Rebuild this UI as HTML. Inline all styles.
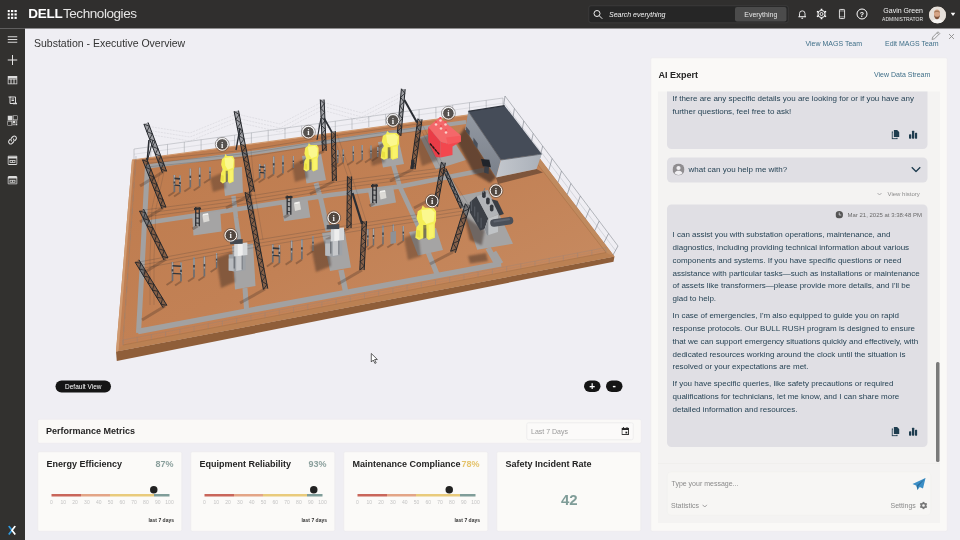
<!DOCTYPE html>
<html lang="en">
<head>
<meta charset="utf-8">
<title>Substation - Executive Overview</title>
<style>
*{box-sizing:border-box;margin:0;padding:0}
html,body{width:960px;height:540px;overflow:hidden;background:#efeef3}
#vp{position:absolute;left:0;top:0;width:960px;height:540px;overflow:hidden}
#app{position:absolute;left:0;top:0;width:1920px;height:1080px;transform:scale(.5);transform-origin:0 0;font-family:"Liberation Sans",sans-serif;background:#efeef3;color:#222}
#app div,#app svg,#app span{position:absolute}
.t{white-space:nowrap}
#topbar{left:0;top:0;width:1920px;height:57px;background:#302f2e}
#sidebar{left:0;top:57px;width:50px;height:1023px;background:#32312f}
.logo{left:56.5px;top:11px;font-size:27px;line-height:30px;color:#f0f0f0;white-space:nowrap}
.logo b{position:static;color:#fff;letter-spacing:-.55px}
.logo i{position:static;font-style:normal;letter-spacing:-.85px;color:#e4e4e4;margin-left:1px}
#search{left:1177px;top:11px;width:400px;height:35px;border:1px solid #484848;border-radius:5px;background:#262626}
#search .ph{left:40px;top:8px;font-size:14px;font-style:italic;color:#f4f4f4;line-height:17px}
#search .btn{left:292px;top:2px;width:103px;height:29px;background:#4b4b4b;border-radius:4px;color:#e6e6e6;font-size:14px;line-height:29px;text-align:center}
.uname{left:1700px;top:13px;width:146px;text-align:right;color:#f2f2f2;font-size:14px;line-height:17px}
.urole{left:1700px;top:33px;width:146px;text-align:right;color:#e8e8e8;font-size:10px;line-height:12px}
.avatar{left:1858px;top:12.5px;width:34px;height:34px;border-radius:50%;background:#cdbfb3;overflow:hidden}
h1{position:absolute;left:68px;top:73px;font-size:21px;font-weight:normal;color:#333;line-height:26px;white-space:nowrap}
.lnk{font-size:14px;color:#3f6f88;line-height:18px;white-space:nowrap}
.panel{background:#faf9f7;border:1px solid #e8e7ea;border-radius:4px}
.h18{font-size:18px;font-weight:bold;color:#242424;line-height:22px;white-space:nowrap}
.bubble{left:1334px;width:521px;background:#e0dfe4;border-radius:9px}
.msg{left:1345px;font-size:16px;line-height:25.7px;color:#1f3d4f;white-space:nowrap}
.card{top:903px;width:289px;height:160px;background:#fbfaf8;border:1px solid #e8e7ea;border-radius:4px}
.card .ct{left:17px;top:13px}
.card .v{right:16px;top:13px;font-size:18px;font-weight:bold;line-height:22px}
.card .l7{right:15px;top:130px;font-size:10px;font-weight:bold;color:#333;line-height:12px}
.gauge{left:27px;top:84px;width:236px;height:5px;background:linear-gradient(90deg,#c9665b 0,#c9665b 25%,#e3a587 25%,#e3a587 50%,#e9cb7c 50%,#e9cb7c 87%,#7f9d99 87%,#7f9d99 100%)}
.ticks{left:27px;top:94px;width:236px;height:12px;font-size:10px;color:#c4c4c4;line-height:12px}
.ticks span{width:30px;margin-left:-15px;text-align:center;top:0}
.dot{top:68px;width:15px;height:15px;margin-left:-7.5px;border-radius:50%;background:#222}
</style>
</head>
<body>
<div id="vp"><div id="app">

<div id="topbar">
  <svg style="left:15px;top:20px" width="19" height="18" viewBox="0 0 19 18" fill="#fff"><rect x="0" y="0" width="4.5" height="4.2"/><rect x="7" y="0" width="4.5" height="4.2"/><rect x="14" y="0" width="4.5" height="4.2"/><rect x="0" y="6.8" width="4.5" height="4.2"/><rect x="7" y="6.8" width="4.5" height="4.2"/><rect x="14" y="6.8" width="4.5" height="4.2"/><rect x="0" y="13.6" width="4.5" height="4.2"/><rect x="7" y="13.6" width="4.5" height="4.2"/><rect x="14" y="13.6" width="4.5" height="4.2"/></svg>
  <div class="logo"><b>DELL</b><i>Technologies</i></div>
  <div id="search">
    <svg style="left:8px;top:7px" width="20" height="20" viewBox="0 0 20 20" fill="none" stroke="#efefef" stroke-width="2"><circle cx="8" cy="8" r="6"/><path d="M12.5 12.5l6 6"/></svg>
    <div class="ph t">Search everything</div>
    <div class="btn">Everything</div>
  </div>
  <!-- bell -->
  <svg style="left:1596px;top:18px" width="17" height="21" viewBox="0 0 20 24" fill="none" stroke="#fff" stroke-width="2"><path d="M3.5 17.5v-7a6.5 6.5 0 0 1 13 0v7"/><path d="M1 18h18" stroke-width="2.4"/><path d="M8 21.5h4" stroke-width="2.4"/></svg>
  <!-- gear -->
  <svg style="left:1631px;top:16px" width="24" height="24" viewBox="0 0 24 24" fill="none" stroke="#fff"><circle cx="12" cy="12" r="7.2" stroke-width="2"/><circle cx="12" cy="12" r="3" stroke-width="1.8"/><g stroke-width="3.4"><path d="M12 1.5v3M12 19.5v3M2.9 6.75l2.6 1.5M18.5 15.75l2.6 1.5M2.9 17.25l2.6-1.5M18.5 8.25l2.6-1.5"/></g></svg>
  <!-- phone -->
  <svg style="left:1677px;top:17px" width="14" height="22" viewBox="0 0 16 24" fill="none" stroke="#fff" stroke-width="2"><rect x="2" y="1.5" width="12" height="21" rx="2"/><path d="M2 5h12M2 18.5h12" stroke-width="1.2"/></svg>
  <!-- help -->
  <svg style="left:1712px;top:16px" width="24" height="24" viewBox="0 0 24 24" fill="none" stroke="#fff" stroke-width="2"><circle cx="12" cy="12" r="10"/><text x="12" y="17" font-family="Liberation Sans,sans-serif" font-size="14" font-weight="bold" text-anchor="middle" fill="#fff" stroke="none">?</text></svg>
  <div class="uname t">Gavin Green</div>
  <div class="urole t">ADMINISTRATOR</div>
  <div class="avatar">
    <svg style="left:0;top:0" width="34" height="34" viewBox="0 0 34 34"><rect width="34" height="34" fill="#e5dfd9"/><path d="M4 34c1-6 6-8.500 12.500-8.500S29 28 30 34z" fill="#f4f3f1"/><ellipse cx="16" cy="14.500" rx="6" ry="8.300" fill="#d6a384"/><path d="M10.200 16c0 6.500 2.500 9.500 5.800 9.500s5.800-3 5.800-9.500c-.8 3.500-2.500 4.500-5.800 4.500s-5-1-5.800-4.500z" fill="#7e5139"/><path d="M10.200 13c.3-6.500 11.300-6.500 11.600 0-2.500-2.500-9-2.500-11.600 0z" fill="#a67b5c"/></svg>
  </div>
  <svg style="left:1901px;top:25px" width="10" height="7" viewBox="0 0 10 7"><path d="M0 0h10l-5 7z" fill="#fff"/></svg>
</div>

<div id="sidebar">
  <!-- icons placed relative to sidebar (top offset 57) -->
  <svg style="left:15px;top:15px" width="20" height="14" viewBox="0 0 20 14" stroke="#d8d8d8" stroke-width="2"><path d="M0 1.5h20M0 7h20M0 12.5h20"/></svg>
  <svg style="left:15px;top:53px" width="20" height="20" viewBox="0 0 20 20" stroke="#e4e4e4" stroke-width="2"><path d="M10 0v20M0 10h20"/></svg>
  <svg style="left:15px;top:95px" width="20" height="17" viewBox="0 0 20 17" fill="none" stroke="#dcdcdc" stroke-width="2"><rect x="1" y="1" width="18" height="15"/><path d="M1 6h18M7 6v10M13 6v10" /><path d="M1 3h18" stroke-width="3"/></svg>
  <svg style="left:16px;top:134px" width="19" height="19" viewBox="0 0 19 19" fill="none" stroke="#dcdcdc" stroke-width="2"><path d="M4 3h11v13H4z"/><path d="M1 3h4M7 7h5M7 10h5" /><path d="M10 16h8" stroke-width="3"/></svg>
  <svg style="left:15px;top:174px" width="20" height="20" viewBox="0 0 20 20" fill="#dcdcdc"><rect x="0" y="0" width="9" height="9"/><rect x="11" y="0" width="9" height="9" fill="none" stroke="#dcdcdc" stroke-width="2"/><rect x="0" y="11" width="9" height="9" fill="none" stroke="#dcdcdc" stroke-width="2"/><rect x="11" y="11" width="4" height="4"/><rect x="16" y="16" width="4" height="4"/><rect x="16" y="11" width="4" height="4" opacity=".6"/><rect x="11" y="16" width="4" height="4" opacity=".6"/></svg>
  <svg style="left:14px;top:212px" width="22" height="22" viewBox="0 0 22 22" fill="none" stroke="#dcdcdc" stroke-width="2.2" stroke-linecap="round"><path d="M9 13a4.5 4.5 0 0 1 0-6l3-3a4.3 4.3 0 0 1 6 6l-2 2"/><path d="M13 9a4.5 4.5 0 0 1 0 6l-3 3a4.3 4.3 0 0 1-6-6l2-2"/></svg>
  <svg style="left:15px;top:254px" width="20" height="19" viewBox="0 0 20 19" fill="none" stroke="#dcdcdc" stroke-width="2"><rect x="1" y="1" width="18" height="17" rx="1"/><path d="M1 4h18" stroke-width="4"/><rect x="5" y="10" width="10" height="4" stroke-width="1.6"/><path d="M10 10v4" stroke-width="1.6"/></svg>
  <svg style="left:15px;top:295px" width="20" height="17" viewBox="0 0 20 17" fill="none" stroke="#dcdcdc" stroke-width="2"><rect x="1" y="1" width="18" height="15" rx="1"/><path d="M1 3.5h18" stroke-width="3.4"/><rect x="5" y="8.5" width="10" height="4" stroke-width="1.6"/><path d="M10 8.5v4" stroke-width="1.6"/></svg>
  <!-- X logo bottom -->
  <svg style="left:16px;top:994px" width="16" height="19" viewBox="0 0 16 19" fill="none" stroke-width="3.4"><path d="M1.5 1l6.5 8.500-6.500 8.500" stroke="#2f9be0"/><path d="M14.500 1L8 9.500l6.500 8.500" stroke="#fff"/></svg>
</div>

<h1>Substation - Executive Overview</h1>
<div class="lnk" style="left:1611px;top:77px">View MAGS Team</div>
<div class="lnk" style="left:1770px;top:77px">Edit MAGS Team</div>
<svg style="left:1861px;top:60px" width="22" height="22" viewBox="0 0 22 22" fill="none" stroke="#9a9a9a" stroke-width="2"><path d="M3 19l1.5-5L15 3.5l3.5 3.5L8 17.5z"/><path d="M13 5.5l3.5 3.5"/></svg>
<svg style="left:1897px;top:67px" width="12" height="12" viewBox="0 0 16 16" stroke="#8a8a8a" stroke-width="2.4"><path d="M1.5 1.5l13 13M14.5 1.5l-13 13"/></svg>

<!--SC-->
<svg style="left:50px;top:100px" width="1250" height="720" viewBox="25 50 625 360">
<defs><linearGradient id="gnd" x1="0" y1="0" x2="1" y2="1"><stop offset="0" stop-color="#bd7a4c"/><stop offset=".5" stop-color="#c28155"/><stop offset="1" stop-color="#c98f66"/></linearGradient><filter id="bl" x="-20%" y="-20%" width="140%" height="140%"><feGaussianBlur stdDeviation="1.2"/></filter><filter id="bl2" x="-20%" y="-20%" width="140%" height="140%"><feGaussianBlur stdDeviation="0.5"/></filter></defs>
<polygon points="132.0,160.0 503.0,110.3 614.5,256.5 116.0,351.6" fill="url(#gnd)" />
<polygon points="116.0,351.6 614.5,256.5 613.5,261.8 116.8,361.0" fill="#8f5e39" />
<polygon points="116.0,351.6 614.5,256.5 606.0,252.5 123.0,345.0" fill="#bb8153" />
<polygon points="614.5,256.5 503.0,110.3 497.0,112.0 606.0,252.5" fill="#c08a5e" />
<polyline points="123.0,345.0 606.0,252.5 497.0,112.0" fill="none" stroke="#a87248" stroke-width="0.6" />
<polygon points="132.0,160.0 116.0,351.6 118.5,351.0 134.0,160.5" fill="#d09a70" />
<polyline points="132.0,160.0 503.0,110.3" fill="none" stroke="#d09a70" stroke-width="1.2" />
<polyline points="148.0,166.3 262.5,151.5 380.0,134.0 466.0,122.0" fill="none" stroke="#a2a1a1" stroke-width="4.2" stroke-linejoin="round"/>
<polyline points="147.5,165.0 143.0,250.0 138.5,333.0" fill="none" stroke="#a2a1a1" stroke-width="5" stroke-linejoin="round"/>
<polyline points="138.0,331.5 250.0,310.4 450.0,273.3 501.0,263.8" fill="none" stroke="#a2a1a1" stroke-width="5.5" stroke-linejoin="round"/>
<polyline points="145.0,223.0 240.0,208.7 330.0,195.0 400.0,186.5 484.0,170.0" fill="none" stroke="#a2a1a1" stroke-width="4.6" stroke-linejoin="round"/>
<polyline points="233.5,196.0 236.0,218.0 240.0,246.0" fill="none" stroke="#a2a1a1" stroke-width="4.5" stroke-linejoin="round"/>
<polyline points="245.0,288.0 246.5,309.0" fill="none" stroke="#a2a1a1" stroke-width="5" stroke-linejoin="round"/>
<polyline points="316.0,183.0 321.0,200.0 328.0,231.0" fill="none" stroke="#a2a1a1" stroke-width="5" stroke-linejoin="round"/>
<polyline points="341.0,270.0 345.5,291.0" fill="none" stroke="#a2a1a1" stroke-width="5.5" stroke-linejoin="round"/>
<polyline points="393.0,164.0 400.0,187.0 420.0,230.0" fill="none" stroke="#a2a1a1" stroke-width="4.6" stroke-linejoin="round"/>
<polyline points="428.0,252.0 437.0,274.0" fill="none" stroke="#a2a1a1" stroke-width="5" stroke-linejoin="round"/>
<polyline points="446.0,172.0 457.0,195.0 468.0,214.0" fill="none" stroke="#a2a1a1" stroke-width="4.6" stroke-linejoin="round"/>
<polyline points="488.0,248.0 497.0,264.0" fill="none" stroke="#a2a1a1" stroke-width="5.5" stroke-linejoin="round"/>
<polyline points="501.0,263.5 494.0,252.0" fill="none" stroke="#a2a1a1" stroke-width="5" stroke-linejoin="round"/>
<polygon points="222.0,168.8 241.9,166.9 243.0,192.5 225.0,196.0" fill="#a5a4a4" />
<polygon points="302.0,156.0 321.0,153.5 326.0,180.0 306.5,183.5" fill="#a5a4a4" />
<polygon points="378.0,142.0 398.5,139.5 404.0,164.0 383.0,167.5" fill="#a5a4a4" />
<polygon points="420.0,137.0 446.0,129.0 466.0,160.0 436.0,169.5" fill="#a5a4a4" />
<polygon points="192.2,214.7 220.3,211.0 221.5,231.5 193.5,235.5" fill="#a5a4a4" />
<polygon points="281.3,202.5 307.5,199.2 310.3,217.5 284.0,221.3" fill="#a5a4a4" />
<polygon points="368.0,190.5 393.0,186.5 396.0,202.5 371.0,207.0" fill="#a5a4a4" />
<polygon points="232.0,246.0 253.0,243.5 255.5,286.0 235.0,289.5" fill="#a5a4a4" />
<polygon points="322.0,233.0 344.5,230.0 351.0,267.5 330.0,271.0" fill="#a5a4a4" />
<polygon points="409.0,232.0 436.0,228.0 443.0,250.0 418.0,255.5" fill="#a5a4a4" />
<polygon points="459.0,196.0 488.0,190.0 513.0,243.7 477.2,249.8" fill="#a5a4a4" />
<polygon points="210.0,178.0 224.0,172.0 226.0,188.0 213.0,192.0" fill="#3a2a22" opacity="0.38" filter="url(#bl)"/>
<polygon points="292.0,165.0 306.0,158.0 308.0,178.0 295.0,182.0" fill="#3a2a22" opacity="0.38" filter="url(#bl)"/>
<polygon points="369.0,150.0 383.0,144.0 385.0,162.0 372.0,166.0" fill="#3a2a22" opacity="0.38" filter="url(#bl)"/>
<polygon points="311.0,246.0 328.0,240.0 331.0,266.0 316.0,272.0" fill="#3a2a22" opacity="0.45" filter="url(#bl)"/>
<polygon points="216.0,258.0 232.0,252.0 235.0,282.0 221.0,288.0" fill="#3a2a22" opacity="0.45" filter="url(#bl)"/>
<polygon points="404.0,238.0 418.0,232.0 421.0,256.0 408.0,260.0" fill="#3a2a22" opacity="0.38" filter="url(#bl)"/>
<polygon points="463.9,215.0 484.6,230.4 481.7,245.2 469.8,240.0" fill="#3a2a22" opacity="0.5" filter="url(#bl)"/>
<polygon points="415.0,140.0 430.0,134.0 438.0,160.0 422.0,166.0" fill="#3a2a22" opacity="0.4" filter="url(#bl)"/>
<polygon points="468.0,256.0 486.0,253.0 488.0,261.0 470.0,263.5" fill="#3a2a22" opacity="0.45" filter="url(#bl)"/>
<polygon points="456.0,140.0 465.2,127.0 496.1,177.4 490.2,183.0 473.5,173.0" fill="#3a2a22" opacity="0.68" filter="url(#bl)"/>
<polyline points="163.0,172.0 140.0,186.0" fill="none" stroke="#3a2a22" stroke-width="3" opacity="0.28" filter="url(#bl2)"/>
<polyline points="163.0,208.0 140.0,222.0" fill="none" stroke="#3a2a22" stroke-width="3" opacity="0.28" filter="url(#bl2)"/>
<polyline points="166.0,259.0 142.0,274.0" fill="none" stroke="#3a2a22" stroke-width="3" opacity="0.28" filter="url(#bl2)"/>
<polyline points="165.0,306.0 142.0,320.0" fill="none" stroke="#3a2a22" stroke-width="3" opacity="0.28" filter="url(#bl2)"/>
<polyline points="252.0,194.0 226.0,208.0" fill="none" stroke="#3a2a22" stroke-width="3" opacity="0.28" filter="url(#bl2)"/>
<polyline points="265.0,289.0 240.0,303.0" fill="none" stroke="#3a2a22" stroke-width="3" opacity="0.28" filter="url(#bl2)"/>
<polyline points="324.0,151.0 300.0,163.0" fill="none" stroke="#3a2a22" stroke-width="3" opacity="0.28" filter="url(#bl2)"/>
<polyline points="334.0,181.0 310.0,194.0" fill="none" stroke="#3a2a22" stroke-width="3" opacity="0.28" filter="url(#bl2)"/>
<polyline points="349.0,228.0 326.0,240.0" fill="none" stroke="#3a2a22" stroke-width="3" opacity="0.28" filter="url(#bl2)"/>
<polyline points="362.0,270.0 338.0,284.0" fill="none" stroke="#3a2a22" stroke-width="3" opacity="0.28" filter="url(#bl2)"/>
<polyline points="399.0,136.0 378.0,147.0" fill="none" stroke="#3a2a22" stroke-width="3" opacity="0.28" filter="url(#bl2)"/>
<polyline points="413.0,169.0 390.0,181.0" fill="none" stroke="#3a2a22" stroke-width="3" opacity="0.28" filter="url(#bl2)"/>
<polyline points="437.0,196.0 414.0,208.0" fill="none" stroke="#3a2a22" stroke-width="3" opacity="0.28" filter="url(#bl2)"/>
<polyline points="453.0,252.0 430.0,264.0" fill="none" stroke="#3a2a22" stroke-width="3" opacity="0.28" filter="url(#bl2)"/>
<polyline points="134.0,149.0 503.0,98.0" fill="none" stroke="#7d838b" stroke-width="0.6" opacity="0.55"/>
<polyline points="134.0,154.2 503.0,103.2" fill="none" stroke="#7d838b" stroke-width="0.4" opacity="0.385"/>
<polyline points="134.0,159.5 134.0,149.0" fill="none" stroke="#7d838b" stroke-width="0.7" opacity="0.55"/>
<polyline points="150.8,157.2 150.8,146.7" fill="none" stroke="#7d838b" stroke-width="0.7" opacity="0.55"/>
<polyline points="167.5,154.9 167.5,144.4" fill="none" stroke="#7d838b" stroke-width="0.7" opacity="0.55"/>
<polyline points="184.3,152.5 184.3,142.0" fill="none" stroke="#7d838b" stroke-width="0.7" opacity="0.55"/>
<polyline points="201.1,150.2 201.1,139.7" fill="none" stroke="#7d838b" stroke-width="0.7" opacity="0.55"/>
<polyline points="217.9,147.9 217.9,137.4" fill="none" stroke="#7d838b" stroke-width="0.7" opacity="0.55"/>
<polyline points="234.6,145.6 234.6,135.1" fill="none" stroke="#7d838b" stroke-width="0.7" opacity="0.55"/>
<polyline points="251.4,143.3 251.4,132.8" fill="none" stroke="#7d838b" stroke-width="0.7" opacity="0.55"/>
<polyline points="268.2,141.0 268.2,130.5" fill="none" stroke="#7d838b" stroke-width="0.7" opacity="0.55"/>
<polyline points="285.0,138.6 285.0,128.1" fill="none" stroke="#7d838b" stroke-width="0.7" opacity="0.55"/>
<polyline points="301.7,136.3 301.7,125.8" fill="none" stroke="#7d838b" stroke-width="0.7" opacity="0.55"/>
<polyline points="318.5,134.0 318.5,123.5" fill="none" stroke="#7d838b" stroke-width="0.7" opacity="0.55"/>
<polyline points="335.3,131.7 335.3,121.2" fill="none" stroke="#7d838b" stroke-width="0.7" opacity="0.55"/>
<polyline points="352.0,129.4 352.0,118.9" fill="none" stroke="#7d838b" stroke-width="0.7" opacity="0.55"/>
<polyline points="368.8,127.0 368.8,116.5" fill="none" stroke="#7d838b" stroke-width="0.7" opacity="0.55"/>
<polyline points="385.6,124.7 385.6,114.2" fill="none" stroke="#7d838b" stroke-width="0.7" opacity="0.55"/>
<polyline points="402.4,122.4 402.4,111.9" fill="none" stroke="#7d838b" stroke-width="0.7" opacity="0.55"/>
<polyline points="419.1,120.1 419.1,109.6" fill="none" stroke="#7d838b" stroke-width="0.7" opacity="0.55"/>
<polyline points="435.9,117.8 435.9,107.3" fill="none" stroke="#7d838b" stroke-width="0.7" opacity="0.55"/>
<polyline points="452.7,115.5 452.7,105.0" fill="none" stroke="#7d838b" stroke-width="0.7" opacity="0.55"/>
<polyline points="469.5,113.1 469.5,102.6" fill="none" stroke="#7d838b" stroke-width="0.7" opacity="0.55"/>
<polyline points="486.2,110.8 486.2,100.3" fill="none" stroke="#7d838b" stroke-width="0.7" opacity="0.55"/>
<polyline points="503.0,108.5 503.0,98.0" fill="none" stroke="#7d838b" stroke-width="0.7" opacity="0.55"/>
<polyline points="505.0,96.0 618.0,246.0" fill="none" stroke="#6f757d" stroke-width="0.6" opacity=".8"/>
<polyline points="504.0,103.0 615.5,250.5" fill="none" stroke="#7d838b" stroke-width="0.4" opacity=".6"/>
<polyline points="503.0,110.0 505.0,96.0" fill="none" stroke="#6f757d" stroke-width="0.7" opacity=".8"/>
<polyline points="512.2,122.1 514.4,108.5" fill="none" stroke="#6f757d" stroke-width="0.7" opacity=".8"/>
<polyline points="521.3,134.2 523.8,121.0" fill="none" stroke="#6f757d" stroke-width="0.7" opacity=".8"/>
<polyline points="530.5,146.2 533.2,133.5" fill="none" stroke="#6f757d" stroke-width="0.7" opacity=".8"/>
<polyline points="539.7,158.3 542.7,146.0" fill="none" stroke="#6f757d" stroke-width="0.7" opacity=".8"/>
<polyline points="548.8,170.4 552.1,158.5" fill="none" stroke="#6f757d" stroke-width="0.7" opacity=".8"/>
<polyline points="558.0,182.5 561.5,171.0" fill="none" stroke="#6f757d" stroke-width="0.7" opacity=".8"/>
<polyline points="567.2,194.6 570.9,183.5" fill="none" stroke="#6f757d" stroke-width="0.7" opacity=".8"/>
<polyline points="576.3,206.7 580.3,196.0" fill="none" stroke="#6f757d" stroke-width="0.7" opacity=".8"/>
<polyline points="585.5,218.8 589.8,208.5" fill="none" stroke="#6f757d" stroke-width="0.7" opacity=".8"/>
<polyline points="594.7,230.8 599.2,221.0" fill="none" stroke="#6f757d" stroke-width="0.7" opacity=".8"/>
<polyline points="603.8,242.9 608.6,233.5" fill="none" stroke="#6f757d" stroke-width="0.7" opacity=".8"/>
<polyline points="613.0,255.0 618.0,246.0" fill="none" stroke="#6f757d" stroke-width="0.7" opacity=".8"/>
<polyline points="146.0,126.0 190.0,133.0 236.5,114.0 280.0,124.0 322.0,102.0 362.0,113.0 403.0,92.0" fill="none" stroke="#3b3f45" stroke-width="0.4" opacity=".22" stroke-dasharray="2 1"/>
<polyline points="146.0,130.0 190.0,137.0 236.5,118.0 280.0,128.0 322.0,106.0 362.0,117.0 403.0,96.0" fill="none" stroke="#3b3f45" stroke-width="0.4" opacity=".22" stroke-dasharray="2 1"/>
<polyline points="146.0,134.0 190.0,141.0 236.5,122.0 280.0,132.0 322.0,110.0 362.0,121.0 403.0,100.0" fill="none" stroke="#3b3f45" stroke-width="0.4" opacity=".22" stroke-dasharray="2 1"/>
<polyline points="168.4,196.0 174.4,192.0" fill="none" stroke="#3a2a22" stroke-width="2" opacity=".32" filter="url(#bl2)"/>
<polyline points="174.4,192.0 174.4,175.0" fill="none" stroke="#6a6d72" stroke-width="1.7" />
<polyline points="174.4,185.2 174.4,175.0" fill="none" stroke="#a4a7ab" stroke-width="1.275" />
<polyline points="174.4,183.5 174.4,181.5" fill="none" stroke="#3d4046" stroke-width="1.7" />
<polyline points="174.0,196.5 180.0,192.5" fill="none" stroke="#3a2a22" stroke-width="2" opacity=".32" filter="url(#bl2)"/>
<polyline points="180.0,192.5 180.0,175.5" fill="none" stroke="#6a6d72" stroke-width="1.7" />
<polyline points="180.0,185.7 180.0,175.5" fill="none" stroke="#a4a7ab" stroke-width="1.275" />
<polyline points="180.0,184.0 180.0,182.0" fill="none" stroke="#3d4046" stroke-width="1.7" />
<polyline points="174.4,178.4 180.0,178.9" fill="none" stroke="#34373c" stroke-width="1.6" />
<polyline points="174.4,185.2 180.0,185.7" fill="none" stroke="#34373c" stroke-width="1.2" />
<polyline points="184.3,191.5 190.3,187.5" fill="none" stroke="#3a2a22" stroke-width="2" opacity=".32" filter="url(#bl2)"/>
<polyline points="190.3,187.5 190.3,168.5" fill="none" stroke="#6a6d72" stroke-width="1.7" />
<polyline points="190.3,179.9 190.3,168.5" fill="none" stroke="#a4a7ab" stroke-width="1.275" />
<polyline points="190.3,178.0 190.3,175.7" fill="none" stroke="#3d4046" stroke-width="1.7" />
<polyline points="193.7,190.5 199.7,186.5" fill="none" stroke="#3a2a22" stroke-width="2" opacity=".32" filter="url(#bl2)"/>
<polyline points="199.7,186.5 199.7,167.5" fill="none" stroke="#6a6d72" stroke-width="1.7" />
<polyline points="199.7,178.9 199.7,167.5" fill="none" stroke="#a4a7ab" stroke-width="1.275" />
<polyline points="199.7,177.0 199.7,174.7" fill="none" stroke="#3d4046" stroke-width="1.7" />
<polyline points="204.0,183.0 210.0,179.0" fill="none" stroke="#3a2a22" stroke-width="2" opacity=".32" filter="url(#bl2)"/>
<polyline points="210.0,179.0 210.0,167.0" fill="none" stroke="#6a6d72" stroke-width="1.3" />
<polyline points="210.0,174.2 210.0,167.0" fill="none" stroke="#a4a7ab" stroke-width="0.9750000000000001" />
<polyline points="210.0,173.0 210.0,171.6" fill="none" stroke="#3d4046" stroke-width="1.3" />
<polyline points="253.7,182.0 259.7,178.0" fill="none" stroke="#3a2a22" stroke-width="2" opacity=".32" filter="url(#bl2)"/>
<polyline points="259.7,178.0 259.7,164.0" fill="none" stroke="#6a6d72" stroke-width="1.7" />
<polyline points="259.7,172.4 259.7,164.0" fill="none" stroke="#a4a7ab" stroke-width="1.275" />
<polyline points="259.7,171.0 259.7,169.3" fill="none" stroke="#3d4046" stroke-width="1.7" />
<polyline points="258.6,182.5 264.6,178.5" fill="none" stroke="#3a2a22" stroke-width="2" opacity=".32" filter="url(#bl2)"/>
<polyline points="264.6,178.5 264.6,164.5" fill="none" stroke="#6a6d72" stroke-width="1.7" />
<polyline points="264.6,172.9 264.6,164.5" fill="none" stroke="#a4a7ab" stroke-width="1.275" />
<polyline points="264.6,171.5 264.6,169.8" fill="none" stroke="#3d4046" stroke-width="1.7" />
<polyline points="259.7,166.8 264.6,167.3" fill="none" stroke="#34373c" stroke-width="1.6" />
<polyline points="259.7,172.4 264.6,172.9" fill="none" stroke="#34373c" stroke-width="1.2" />
<polyline points="267.7,178.4 273.7,174.4" fill="none" stroke="#3a2a22" stroke-width="2" opacity=".32" filter="url(#bl2)"/>
<polyline points="273.7,174.4 273.7,156.4" fill="none" stroke="#6a6d72" stroke-width="1.7" />
<polyline points="273.7,167.2 273.7,156.4" fill="none" stroke="#a4a7ab" stroke-width="1.275" />
<polyline points="273.7,165.4 273.7,163.2" fill="none" stroke="#3d4046" stroke-width="1.7" />
<polyline points="277.0,177.4 283.0,173.4" fill="none" stroke="#3a2a22" stroke-width="2" opacity=".32" filter="url(#bl2)"/>
<polyline points="283.0,173.4 283.0,155.4" fill="none" stroke="#6a6d72" stroke-width="1.7" />
<polyline points="283.0,166.2 283.0,155.4" fill="none" stroke="#a4a7ab" stroke-width="1.275" />
<polyline points="283.0,164.4 283.0,162.2" fill="none" stroke="#3d4046" stroke-width="1.7" />
<polyline points="287.4,172.0 293.4,168.0" fill="none" stroke="#3a2a22" stroke-width="2" opacity=".32" filter="url(#bl2)"/>
<polyline points="293.4,168.0 293.4,156.0" fill="none" stroke="#6a6d72" stroke-width="1.3" />
<polyline points="293.4,163.2 293.4,156.0" fill="none" stroke="#a4a7ab" stroke-width="0.9750000000000001" />
<polyline points="293.4,162.0 293.4,160.6" fill="none" stroke="#3d4046" stroke-width="1.3" />
<polyline points="331.8,167.0 337.8,163.0" fill="none" stroke="#3a2a22" stroke-width="2" opacity=".32" filter="url(#bl2)"/>
<polyline points="337.8,163.0 337.8,150.0" fill="none" stroke="#6a6d72" stroke-width="1.4" />
<polyline points="337.8,157.8 337.8,150.0" fill="none" stroke="#a4a7ab" stroke-width="1.0499999999999998" />
<polyline points="337.8,156.5 337.8,154.9" fill="none" stroke="#3d4046" stroke-width="1.4" />
<polyline points="337.3,166.5 343.3,162.5" fill="none" stroke="#3a2a22" stroke-width="2" opacity=".32" filter="url(#bl2)"/>
<polyline points="343.3,162.5 343.3,149.5" fill="none" stroke="#6a6d72" stroke-width="1.4" />
<polyline points="343.3,157.3 343.3,149.5" fill="none" stroke="#a4a7ab" stroke-width="1.0499999999999998" />
<polyline points="343.3,156.0 343.3,154.4" fill="none" stroke="#3d4046" stroke-width="1.4" />
<polyline points="347.3,165.0 353.3,161.0" fill="none" stroke="#3a2a22" stroke-width="2" opacity=".32" filter="url(#bl2)"/>
<polyline points="353.3,161.0 353.3,146.0" fill="none" stroke="#6a6d72" stroke-width="1.4" />
<polyline points="353.3,155.0 353.3,146.0" fill="none" stroke="#a4a7ab" stroke-width="1.0499999999999998" />
<polyline points="353.3,153.5 353.3,151.7" fill="none" stroke="#3d4046" stroke-width="1.4" />
<polyline points="356.2,164.0 362.2,160.0" fill="none" stroke="#3a2a22" stroke-width="2" opacity=".32" filter="url(#bl2)"/>
<polyline points="362.2,160.0 362.2,145.0" fill="none" stroke="#6a6d72" stroke-width="1.4" />
<polyline points="362.2,154.0 362.2,145.0" fill="none" stroke="#a4a7ab" stroke-width="1.0499999999999998" />
<polyline points="362.2,152.5 362.2,150.7" fill="none" stroke="#3d4046" stroke-width="1.4" />
<polyline points="365.0,162.5 371.0,158.5" fill="none" stroke="#3a2a22" stroke-width="2" opacity=".32" filter="url(#bl2)"/>
<polyline points="371.0,158.5 371.0,145.5" fill="none" stroke="#6a6d72" stroke-width="1.4" />
<polyline points="371.0,153.3 371.0,145.5" fill="none" stroke="#a4a7ab" stroke-width="1.0499999999999998" />
<polyline points="371.0,152.0 371.0,150.4" fill="none" stroke="#3d4046" stroke-width="1.4" />
<polyline points="371.8,161.0 377.8,157.0" fill="none" stroke="#3a2a22" stroke-width="2" opacity=".32" filter="url(#bl2)"/>
<polyline points="377.8,157.0 377.8,147.0" fill="none" stroke="#6a6d72" stroke-width="1.4" />
<polyline points="377.8,153.0 377.8,147.0" fill="none" stroke="#a4a7ab" stroke-width="1.0499999999999998" />
<polyline points="377.8,152.0 377.8,150.8" fill="none" stroke="#3d4046" stroke-width="1.4" />
<polyline points="166.5,285.0 172.5,281.0" fill="none" stroke="#3a2a22" stroke-width="2" opacity=".32" filter="url(#bl2)"/>
<polyline points="172.5,281.0 172.5,262.0" fill="none" stroke="#6a6d72" stroke-width="1.7" />
<polyline points="172.5,273.4 172.5,262.0" fill="none" stroke="#a4a7ab" stroke-width="1.275" />
<polyline points="172.5,271.5 172.5,269.2" fill="none" stroke="#3d4046" stroke-width="1.7" />
<polyline points="175.0,285.5 181.0,281.5" fill="none" stroke="#3a2a22" stroke-width="2" opacity=".32" filter="url(#bl2)"/>
<polyline points="181.0,281.5 181.0,262.5" fill="none" stroke="#6a6d72" stroke-width="1.7" />
<polyline points="181.0,273.9 181.0,262.5" fill="none" stroke="#a4a7ab" stroke-width="1.275" />
<polyline points="181.0,272.0 181.0,269.7" fill="none" stroke="#3d4046" stroke-width="1.7" />
<polyline points="172.5,265.8 181.0,266.3" fill="none" stroke="#34373c" stroke-width="1.6" />
<polyline points="172.5,273.4 181.0,273.9" fill="none" stroke="#34373c" stroke-width="1.2" />
<polyline points="188.0,281.5 194.0,277.5" fill="none" stroke="#3a2a22" stroke-width="2" opacity=".32" filter="url(#bl2)"/>
<polyline points="194.0,277.5 194.0,257.5" fill="none" stroke="#6a6d72" stroke-width="1.7" />
<polyline points="194.0,269.5 194.0,257.5" fill="none" stroke="#a4a7ab" stroke-width="1.275" />
<polyline points="194.0,267.5 194.0,265.1" fill="none" stroke="#3d4046" stroke-width="1.7" />
<polyline points="198.4,280.5 204.4,276.5" fill="none" stroke="#3a2a22" stroke-width="2" opacity=".32" filter="url(#bl2)"/>
<polyline points="204.4,276.5 204.4,256.5" fill="none" stroke="#6a6d72" stroke-width="1.7" />
<polyline points="204.4,268.5 204.4,256.5" fill="none" stroke="#a4a7ab" stroke-width="1.275" />
<polyline points="204.4,266.5 204.4,264.1" fill="none" stroke="#3d4046" stroke-width="1.7" />
<polyline points="210.6,272.0 216.6,268.0" fill="none" stroke="#3a2a22" stroke-width="2" opacity=".32" filter="url(#bl2)"/>
<polyline points="216.6,268.0 216.6,253.0" fill="none" stroke="#6a6d72" stroke-width="1.3" />
<polyline points="216.6,262.0 216.6,253.0" fill="none" stroke="#a4a7ab" stroke-width="0.9750000000000001" />
<polyline points="216.6,260.5 216.6,258.7" fill="none" stroke="#3d4046" stroke-width="1.3" />
<polyline points="266.8,266.5 272.8,262.5" fill="none" stroke="#3a2a22" stroke-width="2" opacity=".32" filter="url(#bl2)"/>
<polyline points="272.8,262.5 272.8,244.5" fill="none" stroke="#6a6d72" stroke-width="1.7" />
<polyline points="272.8,255.3 272.8,244.5" fill="none" stroke="#a4a7ab" stroke-width="1.275" />
<polyline points="272.8,253.5 272.8,251.3" fill="none" stroke="#3d4046" stroke-width="1.7" />
<polyline points="273.4,267.0 279.4,263.0" fill="none" stroke="#3a2a22" stroke-width="2" opacity=".32" filter="url(#bl2)"/>
<polyline points="279.4,263.0 279.4,245.0" fill="none" stroke="#6a6d72" stroke-width="1.7" />
<polyline points="279.4,255.8 279.4,245.0" fill="none" stroke="#a4a7ab" stroke-width="1.275" />
<polyline points="279.4,254.0 279.4,251.8" fill="none" stroke="#3d4046" stroke-width="1.7" />
<polyline points="272.8,248.1 279.4,248.6" fill="none" stroke="#34373c" stroke-width="1.6" />
<polyline points="272.8,255.3 279.4,255.8" fill="none" stroke="#34373c" stroke-width="1.2" />
<polyline points="285.6,264.6 291.6,260.6" fill="none" stroke="#3a2a22" stroke-width="2" opacity=".32" filter="url(#bl2)"/>
<polyline points="291.6,260.6 291.6,240.6" fill="none" stroke="#6a6d72" stroke-width="1.7" />
<polyline points="291.6,252.6 291.6,240.6" fill="none" stroke="#a4a7ab" stroke-width="1.275" />
<polyline points="291.6,250.6 291.6,248.2" fill="none" stroke="#3d4046" stroke-width="1.7" />
<polyline points="295.9,263.6 301.9,259.6" fill="none" stroke="#3a2a22" stroke-width="2" opacity=".32" filter="url(#bl2)"/>
<polyline points="301.9,259.6 301.9,239.6" fill="none" stroke="#6a6d72" stroke-width="1.7" />
<polyline points="301.9,251.6 301.9,239.6" fill="none" stroke="#a4a7ab" stroke-width="1.275" />
<polyline points="301.9,249.6 301.9,247.2" fill="none" stroke="#3d4046" stroke-width="1.7" />
<polyline points="307.0,255.0 313.0,251.0" fill="none" stroke="#3a2a22" stroke-width="2" opacity=".32" filter="url(#bl2)"/>
<polyline points="313.0,251.0 313.0,236.0" fill="none" stroke="#6a6d72" stroke-width="1.3" />
<polyline points="313.0,245.0 313.0,236.0" fill="none" stroke="#a4a7ab" stroke-width="0.9750000000000001" />
<polyline points="313.0,243.5 313.0,241.7" fill="none" stroke="#3d4046" stroke-width="1.3" />
<polyline points="361.8,250.0 367.8,246.0" fill="none" stroke="#3a2a22" stroke-width="2" opacity=".32" filter="url(#bl2)"/>
<polyline points="367.8,246.0 367.8,229.0" fill="none" stroke="#6a6d72" stroke-width="1.5" />
<polyline points="367.8,239.2 367.8,229.0" fill="none" stroke="#a4a7ab" stroke-width="1.125" />
<polyline points="367.8,237.5 367.8,235.5" fill="none" stroke="#3d4046" stroke-width="1.5" />
<polyline points="367.5,249.5 373.5,245.5" fill="none" stroke="#3a2a22" stroke-width="2" opacity=".32" filter="url(#bl2)"/>
<polyline points="373.5,245.5 373.5,228.5" fill="none" stroke="#6a6d72" stroke-width="1.5" />
<polyline points="373.5,238.7 373.5,228.5" fill="none" stroke="#a4a7ab" stroke-width="1.125" />
<polyline points="373.5,237.0 373.5,235.0" fill="none" stroke="#3d4046" stroke-width="1.5" />
<polyline points="377.0,248.4 383.0,244.4" fill="none" stroke="#3a2a22" stroke-width="2" opacity=".32" filter="url(#bl2)"/>
<polyline points="383.0,244.4 383.0,225.4" fill="none" stroke="#6a6d72" stroke-width="1.5" />
<polyline points="383.0,236.8 383.0,225.4" fill="none" stroke="#a4a7ab" stroke-width="1.125" />
<polyline points="383.0,234.9 383.0,232.6" fill="none" stroke="#3d4046" stroke-width="1.5" />
<polyline points="387.3,247.5 393.3,243.5" fill="none" stroke="#3a2a22" stroke-width="2" opacity=".32" filter="url(#bl2)"/>
<polyline points="393.3,243.5 393.3,224.5" fill="none" stroke="#6a6d72" stroke-width="1.5" />
<polyline points="393.3,235.9 393.3,224.5" fill="none" stroke="#a4a7ab" stroke-width="1.125" />
<polyline points="393.3,234.0 393.3,231.7" fill="none" stroke="#3d4046" stroke-width="1.5" />
<polyline points="397.3,245.0 403.3,241.0" fill="none" stroke="#3a2a22" stroke-width="2" opacity=".32" filter="url(#bl2)"/>
<polyline points="403.3,241.0 403.3,226.0" fill="none" stroke="#6a6d72" stroke-width="1.5" />
<polyline points="403.3,235.0 403.3,226.0" fill="none" stroke="#a4a7ab" stroke-width="1.125" />
<polyline points="403.3,233.5 403.3,231.7" fill="none" stroke="#3d4046" stroke-width="1.5" />
<polygon points="390.5,232.0 396.0,231.0 396.0,243.0 390.5,244.0" fill="#8e9196" />
<polyline points="192.5,229.0 197.5,226.0" fill="none" stroke="#3a2a22" stroke-width="3" opacity=".35" filter="url(#bl2)"/>
<polyline points="195.7,226.0 195.7,207.0" fill="none" stroke="#2e3034" stroke-width="1.3" />
<polyline points="199.3,226.3 199.3,207.3" fill="none" stroke="#2e3034" stroke-width="1.3" />
<polyline points="195.7,223.0 199.3,223.3" fill="none" stroke="#2e3034" stroke-width="1.1" />
<polyline points="195.7,218.0 199.3,218.3" fill="none" stroke="#2e3034" stroke-width="1.1" />
<polyline points="195.7,213.0 199.3,213.3" fill="none" stroke="#2e3034" stroke-width="1.1" />
<polyline points="195.7,208.0 199.3,208.3" fill="none" stroke="#2e3034" stroke-width="1.1" />
<polyline points="194.0,209.0 201.0,208.5" fill="none" stroke="#2e3034" stroke-width="2" />
<polygon points="202.5,216.0 208.5,215.0 209.5,221.0 203.5,222.5" fill="#dcdad6" />
<polygon points="202.5,216.0 208.5,215.0 208.0,213.0 203.0,214.0" fill="#f2f1ee" />
<polyline points="284.0,217.5 289.0,214.5" fill="none" stroke="#3a2a22" stroke-width="3" opacity=".35" filter="url(#bl2)"/>
<polyline points="287.2,214.5 287.2,195.5" fill="none" stroke="#2e3034" stroke-width="1.3" />
<polyline points="290.8,214.8 290.8,195.8" fill="none" stroke="#2e3034" stroke-width="1.3" />
<polyline points="287.2,211.5 290.8,211.8" fill="none" stroke="#2e3034" stroke-width="1.1" />
<polyline points="287.2,206.5 290.8,206.8" fill="none" stroke="#2e3034" stroke-width="1.1" />
<polyline points="287.2,201.5 290.8,201.8" fill="none" stroke="#2e3034" stroke-width="1.1" />
<polyline points="287.2,196.5 290.8,196.8" fill="none" stroke="#2e3034" stroke-width="1.1" />
<polyline points="285.5,197.5 292.5,197.0" fill="none" stroke="#2e3034" stroke-width="2" />
<polygon points="294.0,204.5 300.0,203.5 301.0,209.5 295.0,211.0" fill="#dcdad6" />
<polygon points="294.0,204.5 300.0,203.5 299.5,201.5 294.5,202.5" fill="#f2f1ee" />
<polyline points="369.5,206.0 374.5,203.0" fill="none" stroke="#3a2a22" stroke-width="3" opacity=".35" filter="url(#bl2)"/>
<polyline points="372.7,203.0 372.7,184.0" fill="none" stroke="#2e3034" stroke-width="1.3" />
<polyline points="376.3,203.3 376.3,184.3" fill="none" stroke="#2e3034" stroke-width="1.3" />
<polyline points="372.7,200.0 376.3,200.3" fill="none" stroke="#2e3034" stroke-width="1.1" />
<polyline points="372.7,195.0 376.3,195.3" fill="none" stroke="#2e3034" stroke-width="1.1" />
<polyline points="372.7,190.0 376.3,190.3" fill="none" stroke="#2e3034" stroke-width="1.1" />
<polyline points="372.7,185.0 376.3,185.3" fill="none" stroke="#2e3034" stroke-width="1.1" />
<polyline points="371.0,186.0 378.0,185.5" fill="none" stroke="#2e3034" stroke-width="2" />
<polygon points="379.5,193.0 385.5,192.0 386.5,198.0 380.5,199.5" fill="#dcdad6" />
<polygon points="379.5,193.0 385.5,192.0 385.0,190.0 380.0,191.0" fill="#f2f1ee" />
<linearGradient id="fw" x1="0" y1="0" x2="1" y2="0"><stop offset="0" stop-color="#c3c7cd"/><stop offset="1" stop-color="#aab0b9"/></linearGradient>
<linearGradient id="lw" x1="0" y1="0" x2="0" y2="1"><stop offset="0" stop-color="#949aa3"/><stop offset="1" stop-color="#7a808a"/></linearGradient>
<polygon points="496.0,177.4 536.5,169.0 543.0,172.5 498.0,184.0" fill="#3a2a22" opacity=".5" filter="url(#bl2)"/>
<polygon points="465.2,129.3 468.3,111.3 500.9,159.8 496.1,177.4" fill="url(#lw)" />
<polygon points="500.9,159.8 541.7,153.9 536.5,169.0 496.1,177.4" fill="url(#fw)" />
<polygon points="468.3,111.3 504.6,105.7 541.7,153.9 500.9,159.8" fill="#454c58" />
<polyline points="468.3,111.3 504.6,105.7" fill="none" stroke="#2d323b" stroke-width="1.2" />
<polyline points="468.3,111.5 500.9,160.0 541.7,154.1" fill="none" stroke="#5d646f" stroke-width="0.8" />
<polygon points="466.2,126.5 469.8,131.0 469.5,136.0 466.0,131.5" fill="#4a505a" />
<polygon points="473.5,137.6 477.8,143.5 477.3,149.0 473.2,143.0" fill="#4a505a" />
<polygon points="481.0,159.0 489.3,159.8 491.0,167.2 482.8,166.3" fill="#20242a" />
<polygon points="484.5,166.5 489.0,167.0 488.5,174.0 484.0,172.5" fill="#3a3f47" />
<polygon points="143.9,124.1 162.4,172.8 166.6,171.2 148.1,122.5" fill="#2c2f35" opacity=".4"/>
<polyline points="143.9,124.1 162.4,172.8" fill="none" stroke="#24272c" stroke-width="1.0" />
<polyline points="148.1,122.5 166.6,171.2" fill="none" stroke="#24272c" stroke-width="1.0" />
<polyline points="143.9,124.1 149.5,126.3 146.8,131.6 152.3,133.8 149.6,139.1 155.2,141.2 152.5,146.6 158.0,148.7 155.3,154.1 160.9,156.2 158.2,161.5 163.7,163.7 161.0,169.0 166.6,171.2" fill="none" stroke="#1f2226" stroke-width="0.8" />
<polyline points="149.0,140.0 147.3,160.0" fill="none" stroke="#2a2d33" stroke-width="1.6" />
<polyline points="153.0,140.0 147.5,160.0" fill="none" stroke="#2a2d33" stroke-width="1" />
<polygon points="142.5,159.8 162.0,208.8 166.0,207.2 146.5,158.2" fill="#2c2f35" opacity=".4"/>
<polyline points="142.5,159.8 162.0,208.8" fill="none" stroke="#24272c" stroke-width="1.0" />
<polyline points="146.5,158.2 166.0,207.2" fill="none" stroke="#24272c" stroke-width="1.0" />
<polyline points="142.5,159.8 148.0,162.0 145.5,167.4 151.0,169.5 148.5,174.9 154.0,177.0 151.5,182.4 157.0,184.6 154.5,190.0 160.0,192.1 157.5,197.5 163.0,199.6 160.5,205.0 166.0,207.2" fill="none" stroke="#1f2226" stroke-width="0.8" />
<polygon points="139.5,211.0 164.0,260.0 168.0,258.0 143.5,209.0" fill="#2c2f35" opacity=".4"/>
<polyline points="139.5,211.0 164.0,260.0" fill="none" stroke="#24272c" stroke-width="1.0" />
<polyline points="143.5,209.0 168.0,258.0" fill="none" stroke="#24272c" stroke-width="1.0" />
<polyline points="139.5,211.0 145.4,212.8 143.3,218.5 149.1,220.3 147.1,226.1 152.9,227.9 150.8,233.6 156.7,235.4 154.6,241.1 160.4,242.9 158.4,248.7 164.2,250.5 162.1,256.2 168.0,258.0" fill="none" stroke="#1f2226" stroke-width="0.8" />
<polygon points="135.1,262.2 163.1,307.7 166.9,305.3 138.9,259.8" fill="#2c2f35" opacity=".4"/>
<polyline points="135.1,262.2 163.1,307.7" fill="none" stroke="#24272c" stroke-width="1.0" />
<polyline points="138.9,259.8 166.9,305.3" fill="none" stroke="#24272c" stroke-width="1.0" />
<polyline points="135.1,262.2 141.0,263.3 139.4,269.2 145.3,270.3 143.7,276.2 149.6,277.3 148.0,283.2 154.0,284.3 152.4,290.2 158.3,291.3 156.7,297.2 162.6,298.3 161.0,304.2 166.9,305.3" fill="none" stroke="#1f2226" stroke-width="0.8" />
<polygon points="234.1,111.4 250.1,192.4 254.5,191.6 238.5,110.6" fill="#2c2f35" opacity=".4"/>
<polyline points="234.1,111.4 250.1,192.4" fill="none" stroke="#24272c" stroke-width="1.0" />
<polyline points="238.5,110.6 254.5,191.6" fill="none" stroke="#24272c" stroke-width="1.0" />
<polyline points="234.1,111.4 239.3,114.6 235.7,119.5 240.9,122.7 237.3,127.6 242.5,130.8 238.9,135.7 244.1,138.9 240.5,143.8 245.7,147.0 242.1,151.9 247.3,155.1 243.7,160.0 248.9,163.2 245.3,168.1 250.5,171.3 246.9,176.2 252.1,179.4 248.5,184.3 253.7,187.5 250.1,192.4" fill="none" stroke="#1f2226" stroke-width="0.8" />
<polyline points="240.0,128.0 236.0,150.0" fill="none" stroke="#2a2d33" stroke-width="1.4" />
<polygon points="245.0,192.4 263.4,289.4 267.8,288.6 249.4,191.6" fill="#2c2f35" opacity=".4"/>
<polyline points="245.0,192.4 263.4,289.4" fill="none" stroke="#24272c" stroke-width="1.0" />
<polyline points="249.4,191.6 267.8,288.6" fill="none" stroke="#24272c" stroke-width="1.0" />
<polyline points="245.0,192.4 250.1,195.6 246.6,200.5 251.7,203.7 248.1,208.6 253.2,211.8 249.6,216.7 254.7,219.9 251.2,224.7 256.3,228.0 252.7,232.8 257.8,236.0 254.2,240.9 259.3,244.1 255.8,249.0 260.9,252.2 257.3,257.1 262.4,260.3 258.8,265.2 263.9,268.4 260.4,273.2 265.5,276.5 261.9,281.3 267.0,284.5 263.4,289.4" fill="none" stroke="#1f2226" stroke-width="0.8" />
<polygon points="320.3,99.7 322.5,151.1 326.3,150.9 324.1,99.5" fill="#2c2f35" opacity=".4"/>
<polyline points="320.3,99.7 322.5,151.1" fill="none" stroke="#24272c" stroke-width="1.0" />
<polyline points="324.1,99.5 326.3,150.9" fill="none" stroke="#24272c" stroke-width="1.0" />
<polyline points="320.3,99.7 324.3,103.8 320.7,108.2 324.6,112.4 321.0,116.8 325.0,120.9 321.4,125.4 325.4,129.5 321.8,133.9 325.7,138.1 322.1,142.5 326.1,146.6 322.5,151.1" fill="none" stroke="#1f2226" stroke-width="0.8" />
<polyline points="324.0,118.0 331.5,131.5" fill="none" stroke="#2a2d33" stroke-width="1.6" />
<polyline points="321.0,118.0 317.0,140.0" fill="none" stroke="#2a2d33" stroke-width="1.2" />
<polygon points="331.3,131.0 332.4,181.0 336.4,181.0 335.3,131.0" fill="#2c2f35" opacity=".4"/>
<polyline points="331.3,131.0 332.4,181.0" fill="none" stroke="#24272c" stroke-width="1.0" />
<polyline points="335.3,131.0 336.4,181.0" fill="none" stroke="#24272c" stroke-width="1.0" />
<polyline points="331.3,131.0 335.4,135.1 331.5,139.4 335.6,143.5 331.7,147.7 335.8,151.8 331.9,156.0 335.9,160.1 332.0,164.4 336.1,168.5 332.2,172.7 336.3,176.8 332.4,181.0" fill="none" stroke="#1f2226" stroke-width="0.8" />
<polygon points="347.4,176.5 346.9,228.0 351.1,228.0 351.6,176.5" fill="#2c2f35" opacity=".4"/>
<polyline points="347.4,176.5 346.9,228.0" fill="none" stroke="#24272c" stroke-width="1.0" />
<polyline points="351.6,176.5 351.1,228.0" fill="none" stroke="#24272c" stroke-width="1.0" />
<polyline points="347.4,176.5 351.6,180.8 347.3,185.1 351.5,189.4 347.2,193.6 351.4,198.0 347.2,202.2 351.3,206.6 347.1,210.8 351.2,215.1 347.0,219.4 351.1,223.7 346.9,228.0" fill="none" stroke="#1f2226" stroke-width="0.8" />
<polyline points="352.5,193.0 362.0,224.0" fill="none" stroke="#2a2d33" stroke-width="2.2" />
<polygon points="362.2,220.9 359.8,269.9 364.2,270.1 366.6,221.1" fill="#2c2f35" opacity=".4"/>
<polyline points="362.2,220.9 359.8,269.9" fill="none" stroke="#24272c" stroke-width="1.0" />
<polyline points="366.6,221.1 364.2,270.1" fill="none" stroke="#24272c" stroke-width="1.0" />
<polyline points="362.2,220.9 366.4,225.2 361.8,229.1 366.0,233.4 361.4,237.2 365.6,241.5 361.0,245.4 365.2,249.7 360.6,253.6 364.8,257.9 360.2,261.7 364.4,266.0 359.8,269.9" fill="none" stroke="#1f2226" stroke-width="0.8" />
<polygon points="401.4,88.8 397.1,135.4 400.9,135.8 405.2,89.2" fill="#2c2f35" opacity=".4"/>
<polyline points="401.4,88.8 397.1,135.4" fill="none" stroke="#24272c" stroke-width="1.0" />
<polyline points="405.2,89.2 400.9,135.8" fill="none" stroke="#24272c" stroke-width="1.0" />
<polyline points="401.4,88.8 404.8,93.4 400.6,97.3 404.0,101.9 399.8,105.8 403.2,110.4 399.1,114.2 402.5,118.8 398.3,122.7 401.7,127.3 397.5,131.2 400.9,135.8" fill="none" stroke="#1f2226" stroke-width="0.8" />
<polyline points="404.4,100.0 417.0,122.5" fill="none" stroke="#2a2d33" stroke-width="2" />
<polygon points="417.9,118.7 410.9,168.7 415.1,169.3 422.1,119.3" fill="#2c2f35" opacity=".4"/>
<polyline points="417.9,118.7 410.9,168.7" fill="none" stroke="#24272c" stroke-width="1.0" />
<polyline points="422.1,119.3 415.1,169.3" fill="none" stroke="#24272c" stroke-width="1.0" />
<polyline points="417.9,118.7 421.5,123.5 416.8,127.0 420.3,131.8 415.6,135.4 419.2,140.1 414.4,143.7 418.0,148.5 413.3,152.0 416.8,156.8 412.1,160.4 415.7,165.1 410.9,168.7" fill="none" stroke="#1f2226" stroke-width="0.8" />
<polygon points="441.4,162.0 433.5,205.6 437.5,206.4 445.4,162.8" fill="#2c2f35" opacity=".4"/>
<polyline points="441.4,162.0 433.5,205.6" fill="none" stroke="#24272c" stroke-width="1.0" />
<polyline points="445.4,162.8 437.5,206.4" fill="none" stroke="#24272c" stroke-width="1.0" />
<polyline points="441.4,162.0 444.6,166.7 440.0,170.0 443.2,174.6 438.6,177.9 441.8,182.6 437.1,185.8 440.3,190.5 435.7,193.8 438.9,198.4 434.3,201.7 437.5,206.4" fill="none" stroke="#1f2226" stroke-width="0.8" />
<polygon points="443.1,169.6 460.6,208.4 463.4,207.2 445.9,168.4" fill="#2c2f35" opacity=".4"/>
<polyline points="443.1,169.6 460.6,208.4" fill="none" stroke="#24272c" stroke-width="1.0" />
<polyline points="445.9,168.4 463.4,207.2" fill="none" stroke="#24272c" stroke-width="1.0" />
<polyline points="443.1,169.6 447.6,172.3 446.6,177.4 451.1,180.0 450.1,185.1 454.6,187.8 453.6,192.9 458.1,195.5 457.1,200.7 461.6,203.3 460.6,208.4" fill="none" stroke="#1f2226" stroke-width="0.8" />
<polygon points="465.4,203.7 450.6,251.3 455.4,252.7 470.2,205.1" fill="#2c2f35" opacity=".4"/>
<polyline points="465.4,203.7 450.6,251.3" fill="none" stroke="#24272c" stroke-width="1.0" />
<polyline points="470.2,205.1 455.4,252.7" fill="none" stroke="#24272c" stroke-width="1.0" />
<polyline points="465.4,203.7 469.0,209.1 462.9,211.6 466.5,217.0 460.5,219.5 464.0,225.0 458.0,227.5 461.6,232.9 455.5,235.4 459.1,240.8 453.1,243.3 456.6,248.8 450.6,251.3" fill="none" stroke="#1f2226" stroke-width="0.8" />
<polyline points="413.0,160.0 412.0,169.0" fill="none" stroke="#2a2d33" stroke-width="3" />
<polyline points="146.0,160.0 247.0,150.0 333.0,136.0 418.0,124.0" fill="none" stroke="#2b2e33" stroke-width="0.5" opacity="0.38"/>
<polyline points="144.0,210.0 250.0,196.0 349.0,180.0 441.0,168.0" fill="none" stroke="#2b2e33" stroke-width="0.5" opacity="0.38"/>
<polyline points="139.0,262.0 257.0,240.0 363.0,223.0 466.0,207.0" fill="none" stroke="#2b2e33" stroke-width="0.5" opacity="0.38"/>
<polyline points="146.0,163.5 247.0,153.5 333.0,139.5 418.0,127.5" fill="none" stroke="#2b2e33" stroke-width="0.5" opacity="0.38"/>
<polyline points="144.0,213.5 250.0,199.5 349.0,183.5 441.0,171.5" fill="none" stroke="#2b2e33" stroke-width="0.5" opacity="0.38"/>
<polyline points="139.0,265.5 257.0,243.5 363.0,226.5 466.0,210.5" fill="none" stroke="#2b2e33" stroke-width="0.5" opacity="0.38"/>
<polyline points="146.0,167.0 247.0,157.0 333.0,143.0 418.0,131.0" fill="none" stroke="#2b2e33" stroke-width="0.5" opacity="0.38"/>
<polyline points="144.0,217.0 250.0,203.0 349.0,187.0 441.0,175.0" fill="none" stroke="#2b2e33" stroke-width="0.5" opacity="0.38"/>
<polyline points="139.0,269.0 257.0,247.0 363.0,230.0 466.0,214.0" fill="none" stroke="#2b2e33" stroke-width="0.5" opacity="0.38"/>
<polyline points="160.0,172.0 152.0,208.0 150.0,258.0 150.0,305.0" fill="none" stroke="#2b2e33" stroke-width="0.5" opacity="0.3"/>
<polyline points="247.0,150.0 251.0,194.0 259.0,240.0" fill="none" stroke="#2b2e33" stroke-width="0.5" opacity="0.3"/>
<polyline points="333.0,134.0 349.0,180.0 363.0,224.0" fill="none" stroke="#2b2e33" stroke-width="0.5" opacity="0.3"/>
<polyline points="418.0,124.0 441.0,168.0 466.0,207.0" fill="none" stroke="#2b2e33" stroke-width="0.5" opacity="0.3"/>
<polyline points="164.0,172.0 156.0,208.0 154.0,258.0 154.0,305.0" fill="none" stroke="#2b2e33" stroke-width="0.5" opacity="0.3"/>
<polyline points="251.0,150.0 255.0,194.0 263.0,240.0" fill="none" stroke="#2b2e33" stroke-width="0.5" opacity="0.3"/>
<polyline points="337.0,134.0 353.0,180.0 367.0,224.0" fill="none" stroke="#2b2e33" stroke-width="0.5" opacity="0.3"/>
<polyline points="422.0,124.0 445.0,168.0 470.0,207.0" fill="none" stroke="#2b2e33" stroke-width="0.5" opacity="0.3"/>
<g transform="translate(220.3,154) scale(0.833,0.983)"><path d="M2 5l3-2 1-3 2 2 7 0 2 3 0 8-1 3 0 12-5 2-2-2 0-8-2 0 0 8-4 2-3-2 1-9 2-3-2-5z" fill="#f5ee56"/><path d="M5 4l8-1 3 3-1 8-6 2-3-4z" fill="#fbf88e"/><path d="M11 17l4-1 0 11-4 2z" fill="#f9f36c"/><path d="M1 21l3 1 0 6-3-1z" fill="#e9e043"/><path d="M6.500 17l2.500 0 0 11-2.500 1z" fill="#6b6640" opacity=".75"/></g>
<g transform="translate(303.5,143) scale(0.889,0.950)"><path d="M2 5l3-2 1-3 2 2 7 0 2 3 0 8-1 3 0 12-5 2-2-2 0-8-2 0 0 8-4 2-3-2 1-9 2-3-2-5z" fill="#f5ee56"/><path d="M5 4l8-1 3 3-1 8-6 2-3-4z" fill="#fbf88e"/><path d="M11 17l4-1 0 11-4 2z" fill="#f9f36c"/><path d="M1 21l3 1 0 6-3-1z" fill="#e9e043"/><path d="M6.500 17l2.500 0 0 11-2.500 1z" fill="#6b6640" opacity=".75"/></g>
<g transform="translate(380.7,131) scale(1.083,0.960)"><path d="M2 5l3-2 1-3 2 2 7 0 2 3 0 8-1 3 0 12-5 2-2-2 0-8-2 0 0 8-4 2-3-2 1-9 2-3-2-5z" fill="#f5ee56"/><path d="M5 4l8-1 3 3-1 8-6 2-3-4z" fill="#fbf88e"/><path d="M11 17l4-1 0 11-4 2z" fill="#f9f36c"/><path d="M1 21l3 1 0 6-3-1z" fill="#e9e043"/><path d="M6.500 17l2.500 0 0 11-2.500 1z" fill="#6b6640" opacity=".75"/></g>
<g transform="translate(415.3,205.5) scale(1.222,1.150)"><path d="M2 5l3-2 1-3 2 2 7 0 2 3 0 8-1 3 0 12-5 2-2-2 0-8-2 0 0 8-4 2-3-2 1-9 2-3-2-5z" fill="#f5ee56"/><path d="M5 4l8-1 3 3-1 8-6 2-3-4z" fill="#fbf88e"/><path d="M11 17l4-1 0 11-4 2z" fill="#f9f36c"/><path d="M1 21l3 1 0 6-3-1z" fill="#e9e043"/><path d="M6.500 17l2.500 0 0 11-2.500 1z" fill="#6b6640" opacity=".75"/></g>
<polygon points="428.2,127.1 439.5,117.5 461.0,135.5 447.0,143.5 440.7,141.7" fill="#f4686a" />
<polygon points="428.2,127.1 440.7,141.7 440.7,157.6 435.8,156.9 428.2,141.7" fill="#ea3c47" />
<polygon points="440.7,141.7 447.0,143.5 461.0,135.5 461.0,141.5 452.5,146.5 452.5,155.0 440.7,157.6" fill="#f2474e" />
<polygon points="446.0,137.5 460.5,135.8 461.0,141.5 448.0,144.5" fill="#f5595d" />
<polyline points="430.0,143.5 432.0,146.0" fill="none" stroke="#2a1516" stroke-width="1.5" />
<polyline points="432.4,146.3 434.4,148.8" fill="none" stroke="#2a1516" stroke-width="1.5" />
<polyline points="434.8,149.1 436.8,151.6" fill="none" stroke="#2a1516" stroke-width="1.5" />
<polyline points="437.2,151.9 439.2,154.4" fill="none" stroke="#2a1516" stroke-width="1.5" />
<polyline points="436.0,125.5 436.0,121.0" fill="none" stroke="#f25358" stroke-width="2" />
<circle cx="436" cy="124.5" r="1.3" fill="#fbd0c8"/>
<polyline points="441.0,129.5 441.0,125.0" fill="none" stroke="#f25358" stroke-width="2" />
<circle cx="441" cy="128.5" r="1.3" fill="#fbd0c8"/>
<polyline points="446.0,133.5 446.0,129.0" fill="none" stroke="#f25358" stroke-width="2" />
<circle cx="446" cy="132.5" r="1.3" fill="#fbd0c8"/>
<polyline points="440.5,121.5 440.5,117.0" fill="none" stroke="#f25358" stroke-width="2" />
<circle cx="440.5" cy="120.5" r="1.3" fill="#fbd0c8"/>
<polyline points="445.5,125.5 445.5,121.0" fill="none" stroke="#f25358" stroke-width="2" />
<circle cx="445.5" cy="124.5" r="1.3" fill="#fbd0c8"/>
<polygon points="228.7,254.5 245.7,253.5 245.7,270.0 236.7,272.0 228.7,270.5" fill="#9ea2a7" />
<polygon points="236.2,254.5 241.7,254.0 241.7,270.0 236.2,271.0" fill="#c6c8cb" />
<polygon points="228.7,258.5 233.7,258.5 233.7,271.0 228.7,270.5" fill="#b9bcc0" />
<polygon points="234.2,243.5 247.4,242.5 247.4,255.0 234.2,256.5" fill="#d6d8da" />
<polygon points="237.7,244.0 242.7,243.5 242.7,255.5 237.7,256.0" fill="#eeeeee" />
<polygon points="230.1,239.9 242.7,239.0 242.7,243.8 230.1,244.2" fill="#434850" />
<polyline points="234.2,256.5 234.2,268.5" fill="none" stroke="#5d6167" stroke-width="1" />
<polyline points="242.2,255.5 242.2,269.5" fill="none" stroke="#70747a" stroke-width="0.8" />
<polygon points="325.3,239.6 342.3,238.6 342.3,255.1 333.3,257.1 325.3,255.6" fill="#9ea2a7" />
<polygon points="332.8,239.6 338.3,239.1 338.3,255.1 332.8,256.1" fill="#c6c8cb" />
<polygon points="325.3,243.6 330.3,243.6 330.3,256.1 325.3,255.6" fill="#b9bcc0" />
<polygon points="330.8,228.6 344.0,227.6 344.0,240.1 330.8,241.6" fill="#d6d8da" />
<polygon points="334.3,229.1 339.3,228.6 339.3,240.6 334.3,241.1" fill="#eeeeee" />
<polygon points="326.7,225.0 339.3,224.1 339.3,228.9 326.7,229.3" fill="#434850" />
<polyline points="330.8,241.6 330.8,253.6" fill="none" stroke="#5d6167" stroke-width="1" />
<polyline points="338.8,240.6 338.8,254.6" fill="none" stroke="#70747a" stroke-width="0.8" />
<polygon points="469.8,202.2 476.5,196.3 488.3,218.5 484.6,228.9 480.2,230.4 469.8,212.6" fill="#3c4047" />
<polyline points="471.5,201.0 471.5,211.0" fill="none" stroke="#565b63" stroke-width="1.1" />
<polyline points="474.7,206.6 474.7,216.6" fill="none" stroke="#565b63" stroke-width="1.1" />
<polyline points="477.9,212.2 477.9,222.2" fill="none" stroke="#565b63" stroke-width="1.1" />
<polyline points="481.1,217.8 481.1,227.8" fill="none" stroke="#565b63" stroke-width="1.1" />
<polygon points="476.5,196.3 487.6,193.3 500.2,213.3 488.3,218.5" fill="#b1b4b8" />
<polygon points="488.3,218.5 498.0,214.8 498.0,231.9 486.9,235.6 484.6,228.9" fill="#c0c3c6" />
<polygon points="484.6,228.9 488.3,218.5 488.3,235.2 486.9,235.6" fill="#8b8f94" />
<polygon points="491.5,199.3 497.5,200.7 503.9,214.0 499.4,215.6" fill="#393d44" />
<polyline points="494.0,223.0 509.5,220.7" fill="none" stroke="#4a4f58" stroke-width="7.6" stroke-linecap="round"/>
<polyline points="494.5,221.5 509.0,219.3" fill="none" stroke="#666c76" stroke-width="2" stroke-linecap="round" opacity=".7"/>
<polyline points="483.9,196.3 483.9,192.8" fill="none" stroke="#33373d" stroke-width="3.6" stroke-linecap="round"/>
<polyline points="487.9,202.8 487.9,199.3" fill="none" stroke="#33373d" stroke-width="3.6" stroke-linecap="round"/>
<polyline points="491.7,209.8 491.7,206.3" fill="none" stroke="#33373d" stroke-width="3.6" stroke-linecap="round"/>
<polyline points="483.0,193.0 485.0,188.0" fill="none" stroke="#7a7e84" stroke-width="1" />
<polyline points="123.0,340.0 606.0,247.5" fill="none" stroke="#7d838b" stroke-width="0.6" opacity="0.38"/>
<polyline points="123.0,342.5 606.0,250.0" fill="none" stroke="#7d838b" stroke-width="0.4" opacity="0.26599999999999996"/>
<polyline points="123.0,345.0 123.0,340.0" fill="none" stroke="#7d838b" stroke-width="0.7" opacity="0.38"/>
<polyline points="137.2,342.3 137.2,337.3" fill="none" stroke="#7d838b" stroke-width="0.7" opacity="0.38"/>
<polyline points="151.4,339.6 151.4,334.6" fill="none" stroke="#7d838b" stroke-width="0.7" opacity="0.38"/>
<polyline points="165.6,336.8 165.6,331.8" fill="none" stroke="#7d838b" stroke-width="0.7" opacity="0.38"/>
<polyline points="179.8,334.1 179.8,329.1" fill="none" stroke="#7d838b" stroke-width="0.7" opacity="0.38"/>
<polyline points="194.0,331.4 194.0,326.4" fill="none" stroke="#7d838b" stroke-width="0.7" opacity="0.38"/>
<polyline points="208.2,328.7 208.2,323.7" fill="none" stroke="#7d838b" stroke-width="0.7" opacity="0.38"/>
<polyline points="222.4,326.0 222.4,321.0" fill="none" stroke="#7d838b" stroke-width="0.7" opacity="0.38"/>
<polyline points="236.6,323.2 236.6,318.2" fill="none" stroke="#7d838b" stroke-width="0.7" opacity="0.38"/>
<polyline points="250.9,320.5 250.9,315.5" fill="none" stroke="#7d838b" stroke-width="0.7" opacity="0.38"/>
<polyline points="265.1,317.8 265.1,312.8" fill="none" stroke="#7d838b" stroke-width="0.7" opacity="0.38"/>
<polyline points="279.3,315.1 279.3,310.1" fill="none" stroke="#7d838b" stroke-width="0.7" opacity="0.38"/>
<polyline points="293.5,312.4 293.5,307.4" fill="none" stroke="#7d838b" stroke-width="0.7" opacity="0.38"/>
<polyline points="307.7,309.6 307.7,304.6" fill="none" stroke="#7d838b" stroke-width="0.7" opacity="0.38"/>
<polyline points="321.9,306.9 321.9,301.9" fill="none" stroke="#7d838b" stroke-width="0.7" opacity="0.38"/>
<polyline points="336.1,304.2 336.1,299.2" fill="none" stroke="#7d838b" stroke-width="0.7" opacity="0.38"/>
<polyline points="350.3,301.5 350.3,296.5" fill="none" stroke="#7d838b" stroke-width="0.7" opacity="0.38"/>
<polyline points="364.5,298.8 364.5,293.8" fill="none" stroke="#7d838b" stroke-width="0.7" opacity="0.38"/>
<polyline points="378.7,296.0 378.7,291.0" fill="none" stroke="#7d838b" stroke-width="0.7" opacity="0.38"/>
<polyline points="392.9,293.3 392.9,288.3" fill="none" stroke="#7d838b" stroke-width="0.7" opacity="0.38"/>
<polyline points="407.1,290.6 407.1,285.6" fill="none" stroke="#7d838b" stroke-width="0.7" opacity="0.38"/>
<polyline points="421.3,287.9 421.3,282.9" fill="none" stroke="#7d838b" stroke-width="0.7" opacity="0.38"/>
<polyline points="435.5,285.1 435.5,280.1" fill="none" stroke="#7d838b" stroke-width="0.7" opacity="0.38"/>
<polyline points="449.7,282.4 449.7,277.4" fill="none" stroke="#7d838b" stroke-width="0.7" opacity="0.38"/>
<polyline points="463.9,279.7 463.9,274.7" fill="none" stroke="#7d838b" stroke-width="0.7" opacity="0.38"/>
<polyline points="478.1,277.0 478.1,272.0" fill="none" stroke="#7d838b" stroke-width="0.7" opacity="0.38"/>
<polyline points="492.4,274.3 492.4,269.3" fill="none" stroke="#7d838b" stroke-width="0.7" opacity="0.38"/>
<polyline points="506.6,271.5 506.6,266.5" fill="none" stroke="#7d838b" stroke-width="0.7" opacity="0.38"/>
<polyline points="520.8,268.8 520.8,263.8" fill="none" stroke="#7d838b" stroke-width="0.7" opacity="0.38"/>
<polyline points="535.0,266.1 535.0,261.1" fill="none" stroke="#7d838b" stroke-width="0.7" opacity="0.38"/>
<polyline points="549.2,263.4 549.2,258.4" fill="none" stroke="#7d838b" stroke-width="0.7" opacity="0.38"/>
<polyline points="563.4,260.7 563.4,255.7" fill="none" stroke="#7d838b" stroke-width="0.7" opacity="0.38"/>
<polyline points="577.6,257.9 577.6,252.9" fill="none" stroke="#7d838b" stroke-width="0.7" opacity="0.38"/>
<polyline points="591.8,255.2 591.8,250.2" fill="none" stroke="#7d838b" stroke-width="0.7" opacity="0.38"/>
<polyline points="606.0,252.5 606.0,247.5" fill="none" stroke="#7d838b" stroke-width="0.7" opacity="0.38"/>
<polyline points="136.0,156.0 123.0,339.0" fill="none" stroke="#7d838b" stroke-width="0.6" opacity="0.3"/>
<polyline points="136.0,159.0 123.0,342.0" fill="none" stroke="#7d838b" stroke-width="0.4" opacity="0.21"/>
<polyline points="136.0,162.0 136.0,156.0" fill="none" stroke="#7d838b" stroke-width="0.7" opacity="0.3"/>
<polyline points="135.1,175.1 135.1,169.1" fill="none" stroke="#7d838b" stroke-width="0.7" opacity="0.3"/>
<polyline points="134.1,188.1 134.1,182.1" fill="none" stroke="#7d838b" stroke-width="0.7" opacity="0.3"/>
<polyline points="133.2,201.2 133.2,195.2" fill="none" stroke="#7d838b" stroke-width="0.7" opacity="0.3"/>
<polyline points="132.3,214.3 132.3,208.3" fill="none" stroke="#7d838b" stroke-width="0.7" opacity="0.3"/>
<polyline points="131.4,227.4 131.4,221.4" fill="none" stroke="#7d838b" stroke-width="0.7" opacity="0.3"/>
<polyline points="130.4,240.4 130.4,234.4" fill="none" stroke="#7d838b" stroke-width="0.7" opacity="0.3"/>
<polyline points="129.5,253.5 129.5,247.5" fill="none" stroke="#7d838b" stroke-width="0.7" opacity="0.3"/>
<polyline points="128.6,266.6 128.6,260.6" fill="none" stroke="#7d838b" stroke-width="0.7" opacity="0.3"/>
<polyline points="127.6,279.6 127.6,273.6" fill="none" stroke="#7d838b" stroke-width="0.7" opacity="0.3"/>
<polyline points="126.7,292.7 126.7,286.7" fill="none" stroke="#7d838b" stroke-width="0.7" opacity="0.3"/>
<polyline points="125.8,305.8 125.8,299.8" fill="none" stroke="#7d838b" stroke-width="0.7" opacity="0.3"/>
<polyline points="124.9,318.9 124.9,312.9" fill="none" stroke="#7d838b" stroke-width="0.7" opacity="0.3"/>
<polyline points="123.9,331.9 123.9,325.9" fill="none" stroke="#7d838b" stroke-width="0.7" opacity="0.3"/>
<polyline points="123.0,345.0 123.0,339.0" fill="none" stroke="#7d838b" stroke-width="0.7" opacity="0.3"/>
<circle cx="222.2" cy="144.4" r="6.900" fill="none" stroke="#5a5652" stroke-width=".6"/>
<circle cx="222.2" cy="144.4" r="5.800" fill="#46413e" fill-opacity=".9" stroke="#fff" stroke-width="1"/>
<text x="222.2" y="147.5" font-family="Liberation Serif,serif" font-weight="bold" font-size="8.500" fill="#f4f4f4" text-anchor="middle">i</text>
<circle cx="308.4" cy="132.2" r="6.900" fill="none" stroke="#5a5652" stroke-width=".6"/>
<circle cx="308.4" cy="132.2" r="5.800" fill="#46413e" fill-opacity=".9" stroke="#fff" stroke-width="1"/>
<text x="308.4" y="135.29999999999998" font-family="Liberation Serif,serif" font-weight="bold" font-size="8.500" fill="#f4f4f4" text-anchor="middle">i</text>
<circle cx="393" cy="120.4" r="6.900" fill="none" stroke="#5a5652" stroke-width=".6"/>
<circle cx="393" cy="120.4" r="5.800" fill="#46413e" fill-opacity=".9" stroke="#fff" stroke-width="1"/>
<text x="393" y="123.5" font-family="Liberation Serif,serif" font-weight="bold" font-size="8.500" fill="#f4f4f4" text-anchor="middle">i</text>
<circle cx="448.4" cy="113.3" r="6.900" fill="none" stroke="#5a5652" stroke-width=".6"/>
<circle cx="448.4" cy="113.3" r="5.800" fill="#46413e" fill-opacity=".9" stroke="#fff" stroke-width="1"/>
<text x="448.4" y="116.39999999999999" font-family="Liberation Serif,serif" font-weight="bold" font-size="8.500" fill="#f4f4f4" text-anchor="middle">i</text>
<circle cx="432.2" cy="201" r="6.900" fill="none" stroke="#5a5652" stroke-width=".6"/>
<circle cx="432.2" cy="201" r="5.800" fill="#46413e" fill-opacity=".9" stroke="#fff" stroke-width="1"/>
<text x="432.2" y="204.1" font-family="Liberation Serif,serif" font-weight="bold" font-size="8.500" fill="#f4f4f4" text-anchor="middle">i</text>
<circle cx="496" cy="190.7" r="6.900" fill="none" stroke="#5a5652" stroke-width=".6"/>
<circle cx="496" cy="190.7" r="5.800" fill="#46413e" fill-opacity=".9" stroke="#fff" stroke-width="1"/>
<text x="496" y="193.79999999999998" font-family="Liberation Serif,serif" font-weight="bold" font-size="8.500" fill="#f4f4f4" text-anchor="middle">i</text>
<circle cx="333.8" cy="217.8" r="6.900" fill="none" stroke="#5a5652" stroke-width=".6"/>
<circle cx="333.8" cy="217.8" r="5.800" fill="#46413e" fill-opacity=".9" stroke="#fff" stroke-width="1"/>
<text x="333.8" y="220.9" font-family="Liberation Serif,serif" font-weight="bold" font-size="8.500" fill="#f4f4f4" text-anchor="middle">i</text>
<circle cx="230.8" cy="235.3" r="6.900" fill="none" stroke="#5a5652" stroke-width=".6"/>
<circle cx="230.8" cy="235.3" r="5.800" fill="#46413e" fill-opacity=".9" stroke="#fff" stroke-width="1"/>
<text x="230.8" y="238.4" font-family="Liberation Serif,serif" font-weight="bold" font-size="8.500" fill="#f4f4f4" text-anchor="middle">i</text>
<path d="M371.3 353.500v8.500l2-2 1.600 3.400 1.300-.6-1.600-3.300h2.800z" fill="#fff" stroke="#222" stroke-width=".7"/>
</svg>
<div style="left:111px;top:761px;width:111px;height:24px;border-radius:12px;background:#151515"></div>
<div class="t" style="left:111px;top:761px;width:111px;height:24px;line-height:24px;text-align:center;font-size:13px;color:#fff">Default View</div>
<div style="left:1168px;top:761px;width:33px;height:23px;border-radius:12px;background:#151515;color:#fff;font-size:20px;font-weight:bold;line-height:22px;text-align:center">+</div>
<div style="left:1212px;top:761px;width:33px;height:23px;border-radius:12px;background:#151515;color:#fff;font-size:20px;font-weight:bold;line-height:20px;text-align:center">-</div>
<!--/SC-->

<!--RP-->
<div class="panel" style="left:1301px;top:115px;width:594px;height:948px"></div>
<div style="left:1316px;top:183px;width:564px;height:863px;background:#f4f3f2"></div>
<div class="h18" style="left:1317px;top:138px">AI Expert</div>
<div class="lnk" style="left:1748px;top:140px">View Data Stream</div>

<!-- bubble 1 (cut at top) -->
<div class="bubble" style="top:183px;height:115px;border-radius:0 0 9px 9px"></div>
<div class="msg" style="top:184px">If there are any specific details you are looking for or if you have any</div>
<div class="msg" style="top:210px">further questions, feel free to ask!</div>
<svg class="ic-copy" style="left:1783px;top:260px" width="16" height="18.500" viewBox="0 0 17 20"><path d="M5 0h7l5 5v10H5z" fill="#1f3d4f"/><path d="M3 4.5H1.2v14.3h10.6V17" fill="none" stroke="#1f3d4f" stroke-width="2.2"/></svg>
<svg style="left:1818px;top:261px" width="16.500" height="16.500" viewBox="0 0 18 18" fill="#1f3d4f"><rect x="0" y="8" width="5" height="10" rx="1.5"/><rect x="6.5" y="0" width="5" height="18" rx="1.5"/><rect x="13" y="5" width="5" height="13" rx="1.5"/></svg>

<!-- question bubble -->
<div class="bubble" style="top:315px;height:50px"></div>
<svg style="left:1345px;top:327px" width="24" height="24" viewBox="0 0 24 24"><circle cx="12" cy="12" r="12" fill="#8f8d90"/><circle cx="12" cy="9" r="4.2" fill="#f0eff2"/><path d="M4 19.5c1.5-4 5-5 8-5s6.500 1 8 5a11 11 0 0 1-16 0z" fill="#f0eff2"/></svg>
<div class="msg" style="left:1377px;top:326px">what can you help me with?</div>
<svg style="left:1822px;top:333px" width="20" height="12" viewBox="0 0 20 12" fill="none" stroke="#1f3d4f" stroke-width="2.6"><path d="M1.500 1.500l8.500 8.500 8.500-8.500"/></svg>

<!-- view history -->
<svg style="left:1754px;top:385px" width="10" height="7" viewBox="0 0 10 7" fill="none" stroke="#9a9a9a" stroke-width="1.500"><path d="M1 1l4 4 4-4"/></svg>
<div class="t" style="left:1775px;top:381px;font-size:12px;line-height:14px;color:#8c8c8c">View history</div>

<!-- bubble 3 -->
<div class="bubble" style="top:409px;height:485px"></div>
<svg style="left:1671px;top:422px" width="15" height="15" viewBox="0 0 15 15"><circle cx="7.500" cy="7.500" r="7.500" fill="#555"/><path d="M7.500 3v5h4" fill="none" stroke="#e0dfe4" stroke-width="1.600"/></svg>
<div class="t" style="left:1695px;top:422px;font-size:12px;line-height:14px;color:#6a6a6a">Mar 21, 2025 at 3:38:48 PM</div>
<div class="msg" style="top:456px">I can assist you with substation operations, maintenance, and</div>
<div class="msg" style="top:482px">diagnostics, including providing technical information about various</div>
<div class="msg" style="top:507px">components and systems. If you have specific questions or need</div>
<div class="msg" style="top:533px">assistance with particular tasks—such as installations or maintenance</div>
<div class="msg" style="top:558px">of assets like transformers—please provide more details, and I'll be</div>
<div class="msg" style="top:584px">glad to help.</div>
<div class="msg" style="top:618px">In case of emergencies, I'm also equipped to guide you on rapid</div>
<div class="msg" style="top:643px">response protocols. Our BULL RUSH program is designed to ensure</div>
<div class="msg" style="top:669px">that we can support emergency situations quickly and effectively, with</div>
<div class="msg" style="top:695px">dedicated resources working around the clock until the situation is</div>
<div class="msg" style="top:720px">resolved or your expectations are met.</div>
<div class="msg" style="top:753px">If you have specific queries, like safety precautions or required</div>
<div class="msg" style="top:779px">qualifications for technicians, let me know, and I can share more</div>
<div class="msg" style="top:805px">detailed information and resources.</div>
<svg style="left:1783px;top:854px" width="16" height="18.500" viewBox="0 0 17 20"><path d="M5 0h7l5 5v10H5z" fill="#1f3d4f"/><path d="M3 4.500H1.200v14.300h10.600V17" fill="none" stroke="#1f3d4f" stroke-width="2.200"/></svg>
<svg style="left:1818px;top:855px" width="16.500" height="16.500" viewBox="0 0 18 18" fill="#1f3d4f"><rect x="0" y="8" width="5" height="10" rx="1.500"/><rect x="6.500" y="0" width="5" height="18" rx="1.500"/><rect x="13" y="5" width="5" height="13" rx="1.500"/></svg>

<!-- scrollbar -->
<div style="left:1872px;top:724px;width:7px;height:200px;background:#7a7a7a;border-radius:3px"></div>

<!-- input area -->
<div style="left:1316px;top:926px;width:564px;height:1px;background:#eceae9"></div>
<div style="left:1334px;top:943px;width:528px;height:88px;background:#f7f6f4;border:1px solid #efeeec;border-radius:8px"></div>
<div class="t" style="left:1343px;top:958px;font-size:14px;line-height:18px;color:#8a8a8a">Type your message...</div>
<svg style="left:1824px;top:955px" width="28" height="26" viewBox="0 0 28 26"><path d="M27 1L1 13l8 3.500 2 8.500 4.500-6 6.500 3z" fill="#3b8ec6"/><path d="M27 1L9 16.500l2 8.500 1.500-7z" fill="#2a6f9f"/></svg>
<div class="t" style="left:1342px;top:1002px;font-size:14px;line-height:18px;color:#8a8a8a">Statistics</div>
<svg style="left:1404px;top:1008px" width="11" height="8" viewBox="0 0 11 8" fill="none" stroke="#8a8a8a" stroke-width="1.600"><path d="M1 1.500l4.500 4.500 4.500-4.500"/></svg>
<div class="t" style="left:1781px;top:1002px;font-size:14px;line-height:18px;color:#8a8a8a">Settings</div>
<svg style="left:1839px;top:1003px" width="16" height="16" viewBox="0 0 24 24" fill="none" stroke="#777"><circle cx="12" cy="12" r="6.500" stroke-width="5"/><g stroke-width="4.500"><path d="M12 0.500v4M12 19.500v4M2 6.250l3.500 2M18.500 15.750l3.500 2M2 17.750l3.500-2M18.500 8.250l3.500-2"/></g></svg>
<!--/RP-->

<!--MT-->
<div class="panel" style="left:75px;top:838px;width:1208px;height:49px"></div>
<div class="h18" style="left:92px;top:851px">Performance Metrics</div>
<div style="left:1053px;top:845px;width:214px;height:35px;border:1px solid #e3e2e4;border-radius:4px;background:#fbfaf9"></div>
<div class="t" style="left:1062px;top:854px;font-size:14px;line-height:18px;color:#9a9a9a">Last 7 Days</div>
<svg style="left:1243px;top:854px" width="15" height="16" viewBox="0 0 17 18" fill="none" stroke="#222" stroke-width="2"><rect x="1" y="3" width="15" height="14"/><path d="M1 5h15" stroke-width="4"/><path d="M4.500 0v4M12.500 0v4"/><rect x="9" y="10.500" width="4" height="4" fill="#222" stroke="none"/></svg>

<div class="card" style="left:75px">
  <div class="h18 ct">Energy Efficiency</div><div class="v" style="color:#8a9f9c">87%</div>
  <div class="gauge"></div>
  <div class="ticks"><span style="left:0%">0</span><span style="left:10%">10</span><span style="left:20%">20</span><span style="left:30%">30</span><span style="left:40%">40</span><span style="left:50%">50</span><span style="left:60%">60</span><span style="left:70%">70</span><span style="left:80%">80</span><span style="left:90%">90</span><span style="left:100%">100</span></div>
  <div class="dot" style="left:231px"></div>
  <div class="l7 t">last 7 days</div>
</div>
<div class="card" style="left:381px">
  <div class="h18 ct">Equipment Reliability</div><div class="v" style="color:#8a9f9c">93%</div>
  <div class="gauge"></div>
  <div class="ticks"><span style="left:0%">0</span><span style="left:10%">10</span><span style="left:20%">20</span><span style="left:30%">30</span><span style="left:40%">40</span><span style="left:50%">50</span><span style="left:60%">60</span><span style="left:70%">70</span><span style="left:80%">80</span><span style="left:90%">90</span><span style="left:100%">100</span></div>
  <div class="dot" style="left:245px"></div>
  <div class="l7 t">last 7 days</div>
</div>
<div class="card" style="left:687px">
  <div class="h18 ct">Maintenance Compliance</div><div class="v" style="color:#e4c36c">78%</div>
  <div class="gauge"></div>
  <div class="ticks"><span style="left:0%">0</span><span style="left:10%">10</span><span style="left:20%">20</span><span style="left:30%">30</span><span style="left:40%">40</span><span style="left:50%">50</span><span style="left:60%">60</span><span style="left:70%">70</span><span style="left:80%">80</span><span style="left:90%">90</span><span style="left:100%">100</span></div>
  <div class="dot" style="left:210px"></div>
  <div class="l7 t">last 7 days</div>
</div>
<div class="card" style="left:993px">
  <div class="h18 ct">Safety Incident Rate</div>
  <div class="t" style="left:0;width:289px;top:78px;text-align:center;font-size:30px;font-weight:bold;line-height:34px;color:#7f9c98">42</div>
</div>
<!--/MT-->

</div></div>
</body>
</html>
